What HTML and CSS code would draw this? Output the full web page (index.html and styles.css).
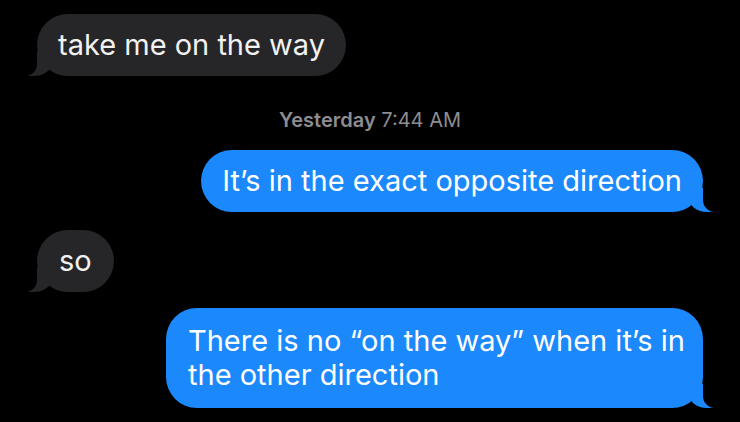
FILE: index.html
```html
<!DOCTYPE html>
<html lang="en">

<head>
    <meta charset="UTF-8" />
    <meta name="viewport" content="width=device-width, initial-scale=1.0" />
    <title>Messages</title>

    <link rel="stylesheet" href="styles.css">
</head>

<body>
    <div class="thread">
        <div class="bubble received first">take me on the way</div>

        <div class="timestamp"><b>Yesterday</b> 7:44 AM</div>

        <div class="bubble sent second">It’s in the exact opposite direction</div>

        <div class="bubble received third">so</div>

        <div class="bubble sent fourth">There is no “on the way” when it’s in the other direction</div>
    </div>
</body>

</html>
```

FILE: styles.css
```css
body {
    margin: 0;
    background-color: #000;
    font-family: Inter, "Noto Sans", sans-serif;
    overflow: hidden;
}

.thread {
    display: flex;
    flex-direction: column;
    padding: 14px 37px 0;
}

.bubble {
    position: relative;
    max-width: 495px;
    padding: 14px 21px;
    border-radius: 31px;
    font-size: 29px;
    line-height: 34px;
    color: #fff;
}

.received {
    align-self: flex-start;
    background-color: #262629;
    color: #f2f2f2;
}

.sent {
    align-self: flex-end;
    background-color: #1b88fc;
}

/* tails */
.bubble::before,
.bubble::after {
    content: "";
    position: absolute;
    bottom: 0;
    height: 24px;
}

.received::before {
    left: -9px;
    width: 24px;
    background-color: #262629;
    border-bottom-right-radius: 18px 14px;
}

.received::after {
    left: -26px;
    width: 26px;
    background-color: #000;
    border-bottom-right-radius: 12px;
}

.sent::before {
    right: -10px;
    width: 24px;
    background-color: #1b88fc;
    border-bottom-left-radius: 18px 14px;
}

.sent::after {
    right: -26px;
    width: 26px;
    background-color: #000;
    border-bottom-left-radius: 12px;
}

.timestamp {
    align-self: center;
    margin-top: 32px;
    font-size: 20px;
    line-height: 24px;
    color: #8d8d92;
}

.timestamp b {
    font-weight: 600;
}

.second {
    margin-top: 18px;
}

.third {
    margin-top: 18px;
    padding: 14px 22px;
}

.fourth {
    margin-top: 16px;
    max-width: 501px;
    padding: 16px 14px 16px 22px;
}
```
